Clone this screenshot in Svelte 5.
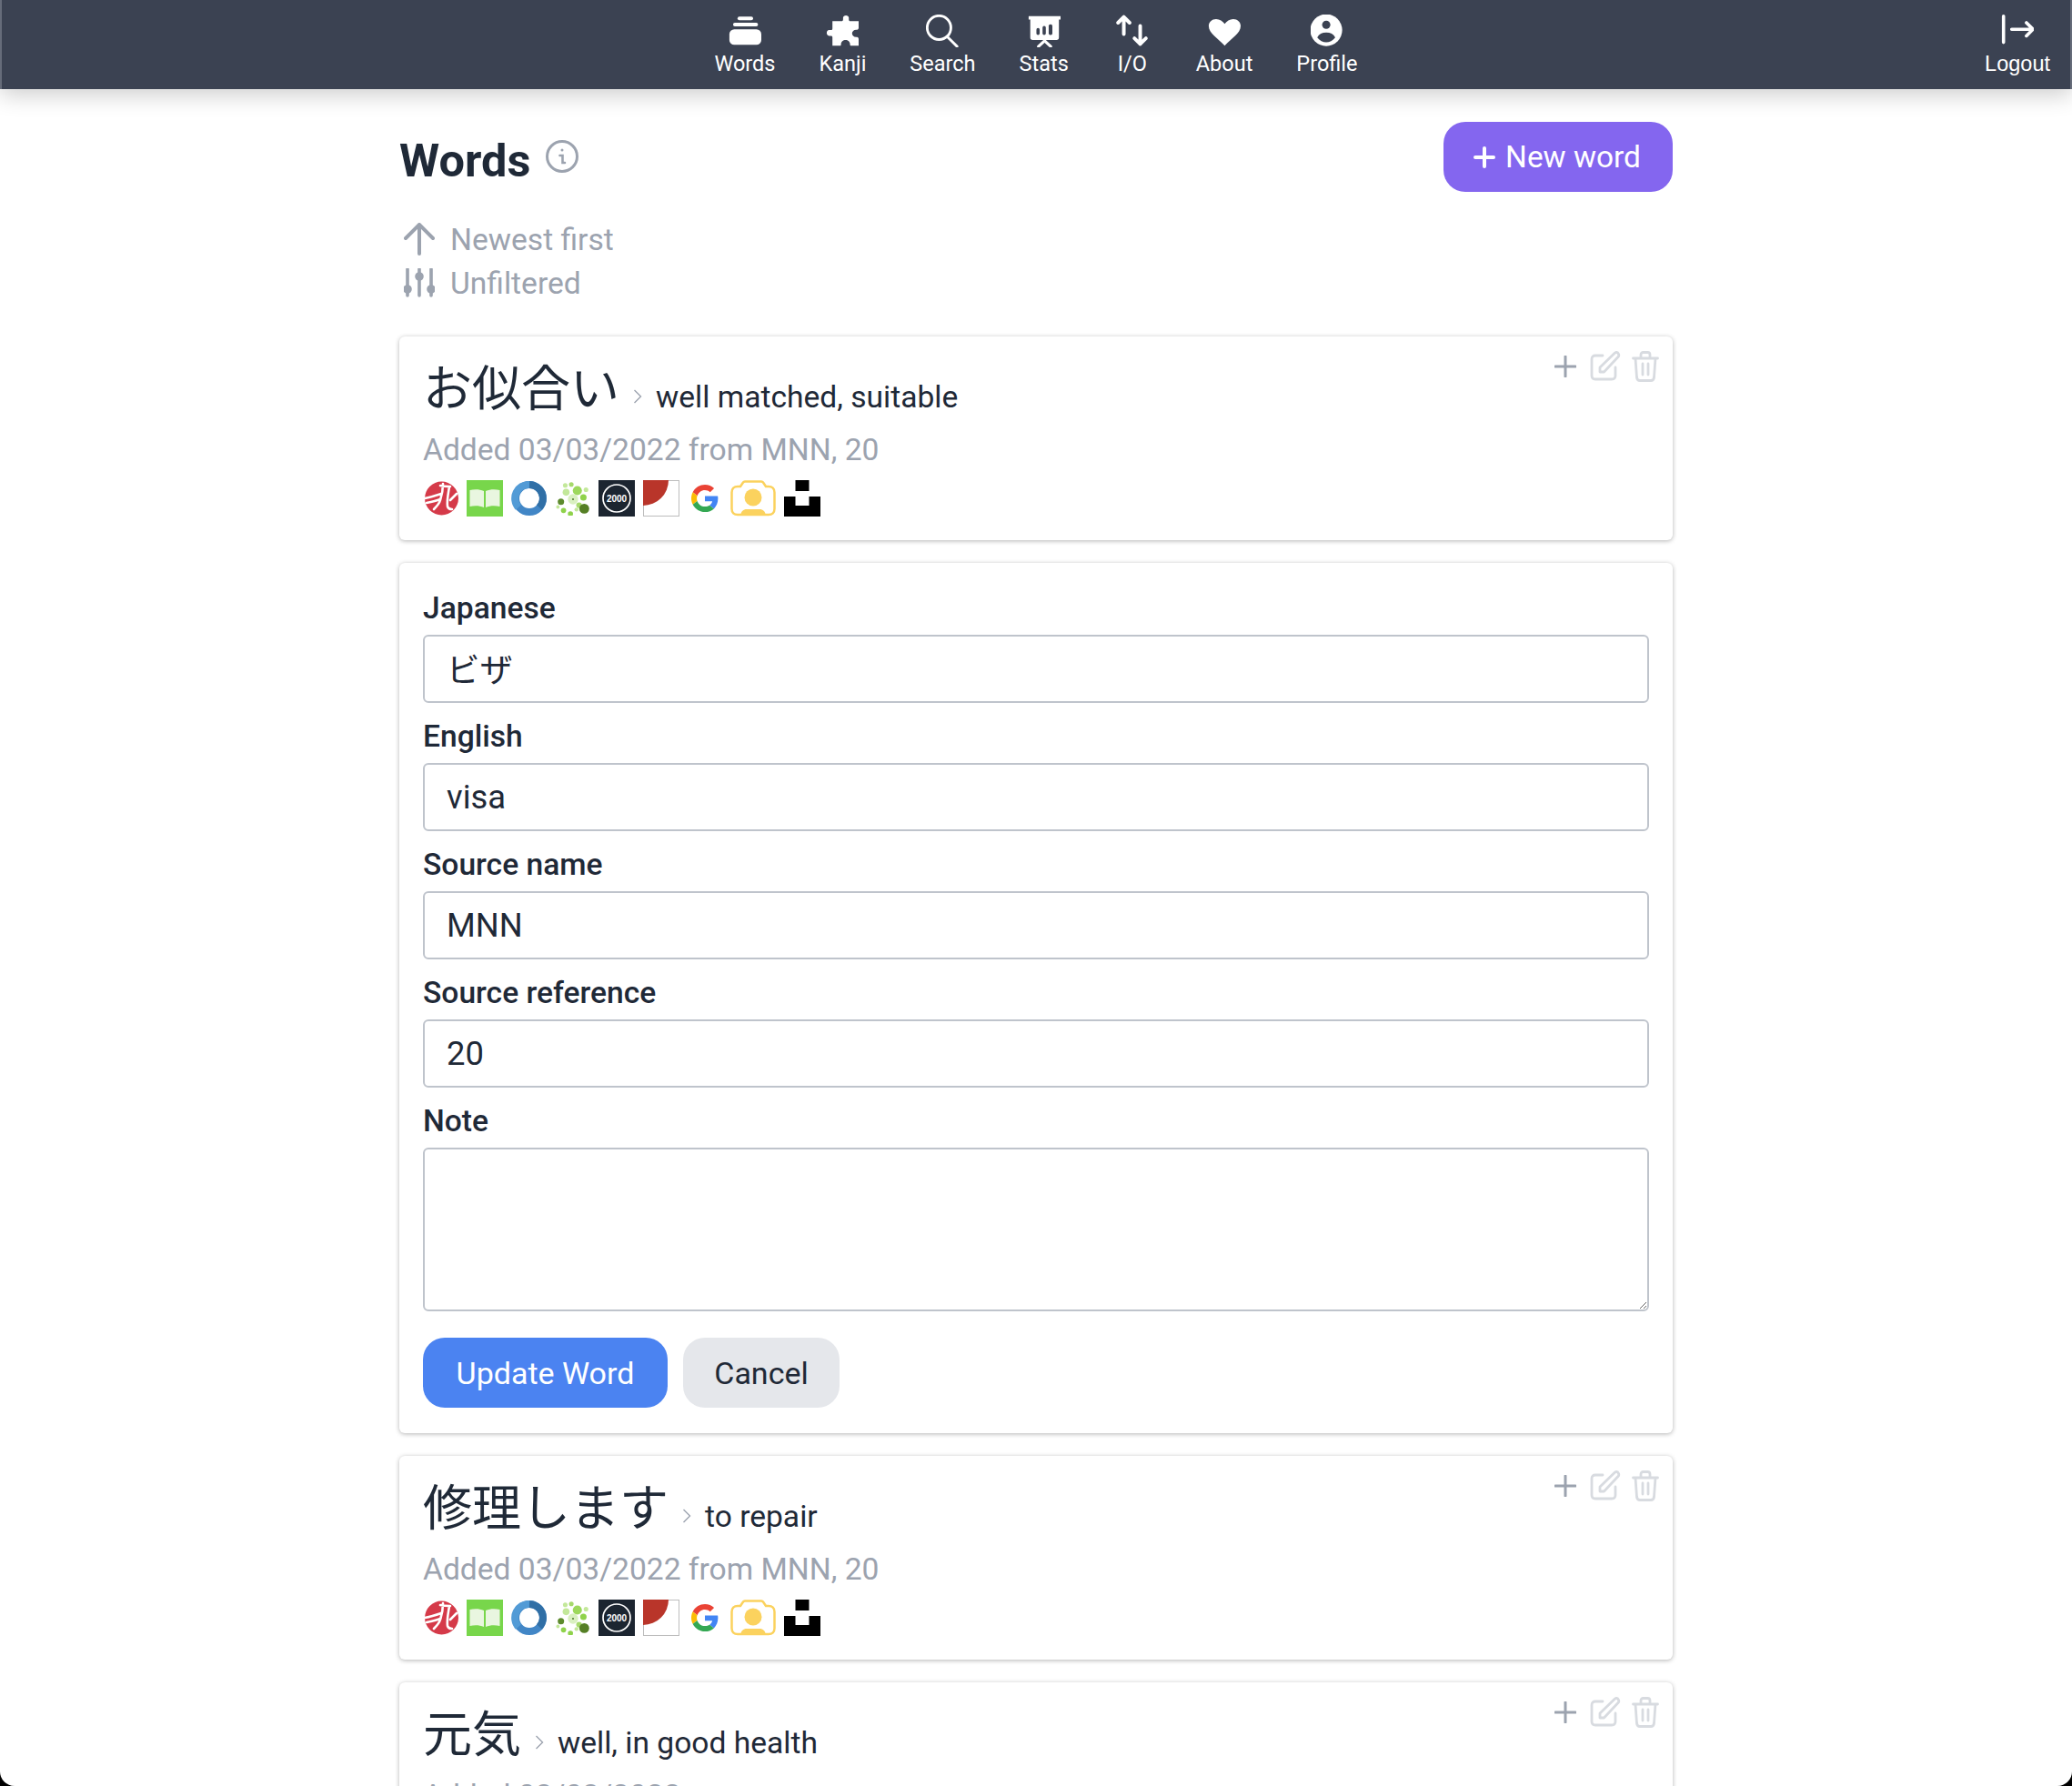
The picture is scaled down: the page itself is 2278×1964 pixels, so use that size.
<script>
  const navItems = ["Words", "Kanji", "Search", "Stats", "I/O", "About", "Profile"];
  const fields = [
    { label: "Japanese", value: "ビザ", jp: true },
    { label: "English", value: "visa" },
    { label: "Source name", value: "MNN" },
    { label: "Source reference", value: "20" }
  ];
</script>

{#snippet navIcon(name)}
  <svg class="nav-icon" viewBox="0 0 40 40" fill="#fff" stroke="none">
    {#if name === "Words"}
      <rect x="11" y="2.500" width="19" height="4.500" rx="2.200" />
      <rect x="5.500" y="10" width="30.500" height="4.500" rx="2.200" />
      <rect x="1" y="18" width="39" height="19" rx="6" />
    {:else if name === "Kanji"}
      <path d="M8 8H19c1 0 2-.5 2-2V4c0-4 7-4 7 0v2c0 1.500 1 2 2 2H40V16c0 2-1 2.500-3 2.500-3 0-5 2-5 4.500s2 4.500 5 4.500c2 0 3 .5 3 2.500v8H31c-1.500 0-1.500-1-1.500-2 0-3-2.500-5-5.500-5s-5.500 2-5.500 5c0 1 0 2-1.500 2H8V28c0-1.500-.5-2-2-2H4c-4 0-4-7 0-7h2c1.500 0 2-.5 2-2z" />
    {:else if name === "Search"}
      <g fill="none" stroke="#fff" stroke-width="3.200" stroke-linecap="round">
        <circle cx="16" cy="16" r="14.500" />
        <path d="M27 28l11 11" />
      </g>
    {:else if name === "Stats"}
      <path d="M1 2h39v4h-2v22c0 2-1 3-3 3H6c-2 0-3-1-3-3V6H1z" />
      <path d="M20.500 30v1M20.500 32l-7.500 7M20.500 32l7.500 7" stroke="#fff" stroke-width="3.500" stroke-linecap="round" fill="none" />
      <g fill="#3b4252">
        <rect x="10.500" y="16.500" width="4" height="8.500" rx="2" />
        <rect x="18" y="14" width="4" height="11" rx="2" />
        <rect x="25.500" y="12" width="4.500" height="13" rx="2" />
      </g>
    {:else if name === "I/O"}
      <g fill="none" stroke="#fff" stroke-width="4.400" stroke-linecap="round" stroke-linejoin="round">
        <path d="M9.500 24V3M2.500 10l7-7 7 7" />
        <path d="M29.500 14V36M22.500 29l7 7 7-7" />
      </g>
    {:else if name === "About"}
      <path d="M20.500 38C12 29 1 23 1 14 1 9 5 5.500 10 5.500c4.500 0 8 2.500 10.500 6 2.500-3.500 6-6 10.500-6 5 0 9 3.500 9 8.500 0 9-11 15-19.500 24z" />
    {:else}
      <circle cx="19" cy="19" r="19.500" />
      <circle cx="19" cy="12.500" r="5" fill="#3b4252" />
      <path d="M8 28c2-4 6-6 11-6s9 2 11 6c-3 4-7 6-11 6s-8-2-11-6z" fill="#3b4252" />
    {/if}
  </svg>
{/snippet}

{#snippet favicons()}
  <div class="favicons">
    <svg width="39" height="38" viewBox="-2 0 39 38">
      <circle cx="18.500" cy="19" r="18.500" fill="#d53a49" />
      <path d="M0 19c6-1 12-3 18-5M2 24c5-1 10-2 15-4M20 3c0 6-1 12-3 18-1 4-4 7-7 10M27 6c-1 7-3 15-2 22 1 3 3 3 5 3M28 21l7-7M17 5c4 1 8 1 11 1" stroke="#fff" stroke-width="2.600" fill="none" stroke-linecap="round" />
    </svg>
    <svg width="40" height="40" viewBox="0 0 40 40">
      <rect width="40" height="40" fill="#78d64b" />
      <path d="M3.500 11c5-1 11-1 15.500 1v18c-4.500-2-10.500-2-15.500-1zM36.500 11c-5-1-11-1-15.500 1v18c4.500-2 10.500-2 15.500-1z" fill="#e9f6e0" />
    </svg>
    <svg width="40" height="40" viewBox="0 0 40 40">
      <circle cx="20" cy="20" r="15" fill="none" stroke="#4186c6" stroke-width="8" />
      <path d="M20 5a15 15 0 0 1 11 25" fill="none" stroke="#306fa6" stroke-width="8" />
      <path d="M8 30a15 15 0 0 1 12-25" fill="none" stroke="#529bd6" stroke-width="8" />
    </svg>
    <svg width="38" height="38" viewBox="0 0 40 40">
      <circle cx="20" cy="21" r="6" fill="#d9f0c0" />
      <circle cx="20" cy="21" r="1" fill="#3f6b1e" />
      <circle cx="11" cy="5" r="2.700" fill="#c3e89a" />
      <circle cx="18" cy="4" r="2.700" fill="#a6d96c" />
      <circle cx="25" cy="11" r="5.300" fill="#9dd85c" />
      <circle cx="35" cy="10" r="2.700" fill="#c3e89a" />
      <circle cx="12" cy="13" r="4" fill="#c3e89a" />
      <circle cx="32" cy="19" r="3.700" fill="#8fd24b" />
      <circle cx="6" cy="24" r="3.700" fill="#5c8a2c" />
      <circle cx="27" cy="28" r="3.300" fill="#a6d96c" />
      <circle cx="2.500" cy="30" r="2" fill="#c3e89a" />
      <circle cx="9" cy="34" r="3" fill="#8fd24b" />
      <circle cx="17" cy="38" r="3" fill="#8fd24b" />
      <circle cx="24" cy="33" r="2.300" fill="#c3e89a" />
      <circle cx="33" cy="32" r="5.700" fill="#557f25" />
    </svg>
    <svg width="40" height="40" viewBox="0 0 40 40">
      <rect width="40" height="40" fill="#1c2530" />
      <circle cx="20" cy="20" r="15" fill="none" stroke="#fff" stroke-width="1.700" />
      <text x="20" y="24" class="fav-text" text-anchor="middle">2000</text>
    </svg>
    <svg width="40" height="40" viewBox="0 0 40 40">
      <rect x=".5" y=".5" width="39" height="39" fill="#fff" stroke="#bdbdbd" />
      <path d="M0 0h28a28 28 0 0 1-28 28z" fill="#b9352a" />
    </svg>
    <svg class="google" width="30" height="30" viewBox="0 0 48 48">
      <path fill="#ea4335" d="M24 9.500c3.500 0 6.700 1.300 9.200 3.600l6.900-6.900C35.900 2.400 30.500 0 24 0 14.600 0 6.500 5.400 2.600 13.200l8 6.200C12.500 13.700 17.800 9.500 24 9.500z" />
      <path fill="#4285f4" d="M47 24.500c0-1.600-.1-3.100-.4-4.500H24v9h13c-.6 3-2.300 5.500-4.800 7.200l7.700 6C44.400 38 47 31.800 47 24.500z" />
      <path fill="#fbbc05" d="M10.500 28.600c-.5-1.400-.8-3-.8-4.600s.3-3.200.8-4.600l-8-6.200C1 16.400 0 20.100 0 24s1 7.600 2.600 10.800z" />
      <path fill="#34a853" d="M24 48c6.500 0 11.900-2.100 15.900-5.800l-7.700-6c-2.200 1.500-4.900 2.300-8.200 2.300-6.200 0-11.500-4.200-13.400-9.900l-8 6.200C6.500 42.600 14.600 48 24 48z" />
    </svg>
    <svg width="50" height="40" viewBox="0 0 50 40">
      <path d="M11 7l3-4.500c.5-.8 1-1 2-1h18c1 0 1.500.2 2 1l3 4.500h3c4 0 6.500 2.500 6.500 6.500v18c0 4-2.500 6.500-6.500 6.500H8c-4 0-6.500-2.500-6.500-6.500v-18C1.500 9.500 4 7 8 7z" fill="#fff" stroke="#fbd25e" stroke-width="2.500" />
      <circle cx="25" cy="19" r="9.500" fill="#fbd25e" />
      <path d="M11 39c1-5 3-7 7-7h14c4 0 6 2 7 7z" fill="#fbd25e" />
    </svg>
    <svg width="40" height="40" viewBox="0 0 40 40">
      <path d="M12.500 0h15v12h-15zM0 18h12.500v10h15V18H40v22H0z" fill="#000" />
    </svg>
  </div>
{/snippet}

{#snippet actions()}
  <div class="actions">
    <svg class="act-plus" width="24" height="24" viewBox="0 0 24 24"><path d="M12 1v22M1 12h22" stroke="#9ca3af" stroke-width="3" stroke-linecap="round" /></svg>
    <svg class="act-edit" width="34" height="34" viewBox="0 0 34 34" fill="none" stroke="#d8dbe0" stroke-width="2.800" stroke-linecap="round" stroke-linejoin="round">
      <path d="M14 5H6C3.500 5 2 6.500 2 9v18c0 2.500 1.500 4 4 4h18c2.500 0 4-1.500 4-4v-9" />
      <path d="M11 23v-5L27 2.500c1.500-1.500 3-1.500 4 0s1.500 2.500 0 4L15.500 23z" />
    </svg>
    <svg width="30" height="34" viewBox="0 0 30 34" fill="none" stroke="#d8dbe0" stroke-width="2.800" stroke-linecap="round" stroke-linejoin="round">
      <path d="M1.500 8h27M4 8l1.500 21c.2 2 1.300 3.500 3.500 3.500h12c2.200 0 3.300-1.500 3.500-3.500L26 8M10 8V4c0-1.500 1-2.500 2.500-2.500h5C19 1.500 20 2.500 20 4v4M12 14v12M18 14v12" />
    </svg>
  </div>
{/snippet}

{#snippet wordCard(jp, en, added)}
  <article class="card word">
    {@render actions()}
    <div class="word-title">
      <span class="jp">{jp}</span>
      <svg class="chev" width="10" height="18" viewBox="0 0 10 18"><path d="M1.500 2l7 7-7 7" fill="none" stroke="#9ca3af" stroke-width="1.400" /></svg>
      <span class="en">{en}</span>
    </div>
    <p class="added">{added}</p>
    {@render favicons()}
  </article>
{/snippet}

<div class="page">
  <nav class="topbar">
    <div class="nav-center">
      {#each navItems as item}
        <a class="nav-item" href="#/">
          {@render navIcon(item)}
          <span>{item}</span>
        </a>
      {/each}
    </div>
    <a class="nav-item logout" href="#/">
      <svg class="nav-icon" viewBox="0 0 40 40" fill="none" stroke="#fff" stroke-width="4" stroke-linecap="round" stroke-linejoin="round">
        <path d="M3 2v32M13 18h25M31 10l8 8-8 8" />
      </svg>
      <span>Logout</span>
    </a>
  </nav>

  <main class="content">
    <header class="head">
      <div class="head-title">
        <h1>Words</h1>
        <svg width="36" height="36" viewBox="0 0 36 36" fill="none" stroke="#9ca3af" stroke-width="3">
          <circle cx="18" cy="18" r="16.500" />
          <circle cx="18" cy="11" r="1.500" fill="#9ca3af" stroke="none" />
          <path d="M15.500 17H18.500V25H21" stroke-width="2.600" stroke-linecap="round" />
        </svg>
      </div>
      <button class="btn new" type="button">
        <svg width="24" height="24" viewBox="0 0 24 24"><path d="M12 2v20M2 12h20" stroke="#fff" stroke-width="4" stroke-linecap="round" /></svg>
        New word
      </button>
    </header>

    <div class="meta">
      <div class="meta-row">
        <svg width="34" height="36" viewBox="0 0 34 36" fill="none" stroke="#9ca3af" stroke-width="4" stroke-linecap="round" stroke-linejoin="round"><path d="M17 34V2M2 17L17 2l15 15" /></svg>
        Newest first
      </div>
      <div class="meta-row">
        <svg width="34" height="32" viewBox="0 0 34 32" fill="#9ca3af" stroke="#9ca3af" stroke-width="3.600" stroke-linecap="round"><path d="M4 1v29M17 1v29M30 1v29" /><circle cx="4" cy="23" r="3" /><circle cx="17" cy="9" r="3" /><circle cx="30" cy="23" r="3" /></svg>
        Unfiltered
      </div>
    </div>

    <div class="cards">
      {@render wordCard("お似合い", "well matched, suitable", "Added 03/03/2022 from MNN, 20")}

      <form class="card edit">
        {#each fields as field}
          <label class="field">
            <span>{field.label}</span>
            <input class:jp-input={field.jp} type="text" value={field.value} />
          </label>
        {/each}
        <label class="field">
          <span>Note</span>
          <textarea></textarea>
        </label>
        <div class="form-actions">
          <button class="btn update" type="button">Update Word</button>
          <button class="btn cancel" type="button">Cancel</button>
        </div>
      </form>

      {@render wordCard("修理します", "to repair", "Added 03/03/2022 from MNN, 20")}
      {@render wordCard("元気", "well, in good health", "Added 03/03/2022")}
    </div>
  </main>
</div>

<style>
  :global(body) {
    margin: 0;
    background: #000;
    overflow: hidden;
  }

  .page {
    height: 1964px;
    overflow: hidden;
    background: #fff;
    border-radius: 0 0 16px 16px;
    font-family: Roboto, "Noto Sans CJK JP", sans-serif;
    color: #1f2937;
  }

  .topbar {
    position: relative;
    box-sizing: border-box;
    height: 98px;
    background: #3b4252;
    border-inline: 2px solid #666c7a;
    display: flex;
    justify-content: center;
    box-shadow: 0 6px 24px rgba(0, 0, 0, 0.2);
  }

  .nav-center {
    display: flex;
    gap: 48px;
  }

  .nav-item {
    display: flex;
    flex-direction: column;
    align-items: center;
    min-width: 44px;
    color: #fff;
    text-decoration: none;
    font-size: 23.500px;
    line-height: 30px;
    padding-top: 16px;
  }

  .nav-icon {
    width: 36px;
    height: 36px;
    margin-bottom: 3px;
  }

  .logout {
    position: absolute;
    right: 22px;
    top: 0;
    font-family: "Liberation Sans", sans-serif;
  }

  .content {
    width: 1400px;
    margin: 0 auto;
    padding-top: 36px;
  }

  .head {
    display: flex;
    justify-content: space-between;
    align-items: flex-start;
  }

  .head-title {
    display: flex;
    align-items: flex-start;
    gap: 17px;
  }

  h1 {
    margin: 0;
    padding-top: 4px;
    font-size: 50.500px;
    line-height: 77px;
    font-weight: 700;
  }

  .head-title svg {
    margin-top: 20px;
  }

  .btn {
    border: 0;
    font-family: inherit;
    font-size: 34px;
    height: 77px;
    border-radius: 24px;
    cursor: pointer;
  }

  .new {
    width: 252px;
    background: #8466ef;
    color: #fff;
    display: flex;
    align-items: center;
    justify-content: center;
    gap: 11px;
    font-size: 33.400px;
    padding-right: 8px;
  }

  .meta {
    margin-top: 24px;
    margin-bottom: 35px;
  }

  .meta-row {
    display: flex;
    align-items: center;
    gap: 17px;
    height: 48px;
    padding-left: 5px;
    font-size: 33.600px;
    color: #9ca3af;
  }

  .cards {
    display: flex;
    flex-direction: column;
    gap: 25px;
  }

  .card {
    position: relative;
    background: #fff;
    border-radius: 6px;
    padding: 26px;
    box-shadow: 0 1px 5px rgba(0, 0, 0, 0.3);
  }

  .word {
    box-sizing: border-box;
    height: 224px;
    padding: 16px 26px 0;
    flex: none;
  }

  .actions {
    position: absolute;
    top: 16px;
    right: 15px;
    display: flex;
    align-items: center;
    gap: 13px;
  }

  .act-plus {
    margin-right: 2px;
    margin-left: -1px;
  }

  .act-edit {
    margin-right: -1px;
  }

  .word-title {
    display: flex;
    align-items: center;
    height: 85px;
  }

  .jp {
    font-size: 54px;
    line-height: 76px;
    margin-bottom: 9px;
    font-family: "Noto Sans CJK JP", sans-serif;
  }

  .chev {
    margin: 15px 15px 0;
  }

  .en {
    font-size: 33.600px;
    margin-top: 15px;
  }

  .added {
    margin: 0;
    font-size: 33.600px;
    line-height: 48px;
    color: #9ca3af;
  }

  .favicons {
    display: flex;
    align-items: center;
    gap: 9px;
    margin-top: 9px;
  }

  .google {
    margin: 0 4px;
  }

  .fav-text {
    font-family: "Liberation Sans", sans-serif;
    font-size: 10px;
    font-weight: 700;
    fill: #fff;
  }

  .edit {
    padding-top: 31px;
    padding-bottom: 28px;
    display: flex;
    flex-direction: column;
    gap: 18px;
  }

  .field {
    display: block;
  }

  .field span {
    display: block;
    font-size: 33.600px;
    line-height: 38px;
    margin-bottom: 10px;
    font-weight: 500;
  }

  input,
  textarea {
    display: block;
    box-sizing: border-box;
    width: 100%;
    border: 2px solid #bfc4cc;
    border-radius: 6px;
    padding: 0 24px;
    font-family: Roboto, sans-serif;
    font-size: 36.400px;
    color: #1f2937;
    background: #fff;
  }

  input {
    height: 75px;
  }

  .jp-input {
    font-family: "Noto Sans CJK JP", sans-serif;
    padding-bottom: 4px;
  }

  textarea {
    height: 180px;
  }

  .form-actions {
    display: flex;
    gap: 17px;
    margin-top: 11px;
  }

  .update {
    width: 269px;
    background: #4b83f1;
    color: #fff;
  }

  .cancel {
    width: 172px;
    background: #e5e7eb;
    color: #1f2937;
  }
</style>
